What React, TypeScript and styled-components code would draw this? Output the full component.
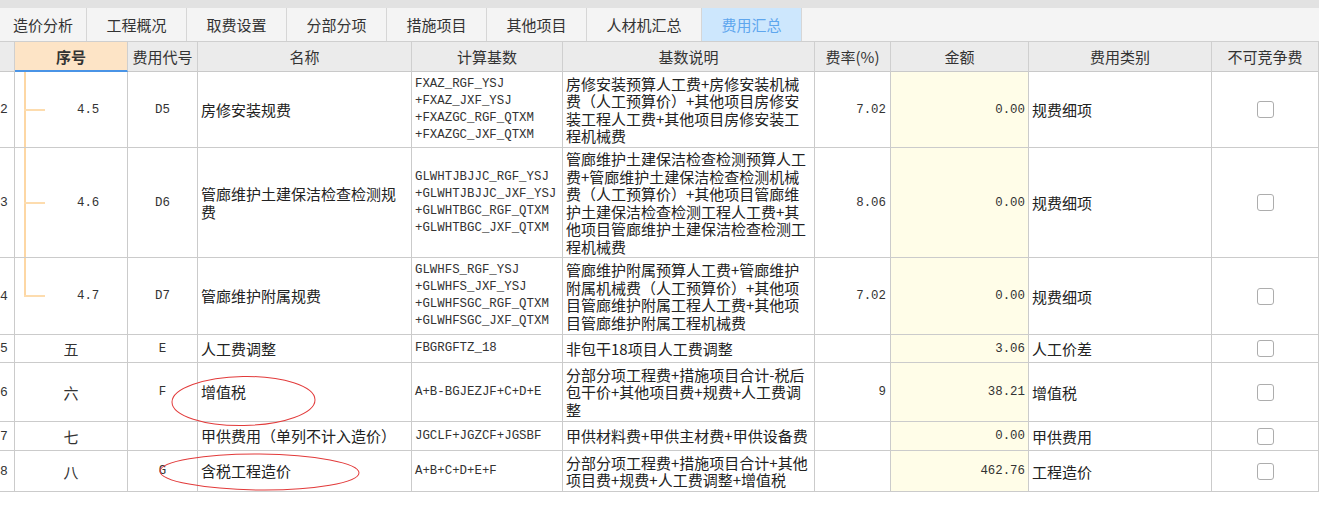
import React from 'react';
import styled, { createGlobalStyle } from 'styled-components';

const GlobalStyle = createGlobalStyle`
  html, body { margin: 0; padding: 0; background: #ffffff; }
  body {
    font-family: "Noto Sans CJK SC", "Noto Sans", sans-serif;
    color: #222;
  }
  * { box-sizing: border-box; }
`;

const COLS = '15px 113px 70px 214px 151px 252px 76px 138px 183px 107px';
const CJK = '"Noto Sans CJK SC", "Noto Sans", sans-serif';
const MONO = '"Liberation Mono", "Noto Sans CJK SC", monospace';

const Page = styled.div`
  position: relative;
  width: 1319px;
  height: 520px;
  overflow: hidden;
  background: #fff;
`;

const TopStrip = styled.div`
  height: 8px;
  background: #e2e2e2;
`;

const TabBar = styled.div`
  display: flex;
  height: 34px;
  background: #f4f4f4;
  border-bottom: 1px solid #cfcfcf;
`;

const Tab = styled.div<{ $w: number; $active?: boolean }>`
  width: ${(p) => p.$w}px;
  display: flex;
  align-items: center;
  justify-content: center;
  border-right: 1px solid #d6d6d6;
  font-family: ${CJK};
  font-size: 15px;
  color: ${(p) => (p.$active ? '#5ea6ee' : '#333')};
  background: ${(p) => (p.$active ? '#cde7fd' : 'transparent')};
`;

const HeaderRow = styled.div`
  display: grid;
  grid-template-columns: ${COLS};
  height: 30px;
  background: #ebebeb;
`;

const HeadCell = styled.div<{ $hot?: boolean }>`
  display: flex;
  align-items: center;
  justify-content: center;
  border-right: 1px solid #cfcfcf;
  border-bottom: ${(p) => (p.$hot ? '2px solid #4a94e6' : '1px solid #c9c9c9')};
  background: ${(p) => (p.$hot ? '#fde4c6' : 'transparent')};
  font-family: ${CJK};
  font-size: 15px;
  font-weight: ${(p) => (p.$hot ? 700 : 400)};
  color: #333;
  white-space: nowrap;
  overflow: hidden;
`;

const Row = styled.div<{ $h: number }>`
  display: grid;
  grid-template-columns: ${COLS};
  height: ${(p) => p.$h}px;
`;

const Cell = styled.div`
  display: flex;
  align-items: center;
  border-right: 1px solid #cbcbcb;
  border-bottom: 1px solid #cbcbcb;
  overflow: hidden;
  min-width: 0;
`;

const NumCell = styled(Cell)`
  font-family: ${MONO};
  font-size: 13px;
  color: #333;
  padding-left: 0;
`;

const SeqCell = styled(Cell)<{ $tree?: 'mid' | 'last' }>`
  position: relative;
  justify-content: ${(p) => (p.$tree ? 'flex-start' : 'center')};
  padding-left: ${(p) => (p.$tree ? '62px' : '0')};
  font-family: ${(p) => (p.$tree ? MONO : CJK)};
  font-size: ${(p) => (p.$tree ? '12.4px' : '15px')};
  color: #333;

  &::before {
    content: '';
    display: ${(p) => (p.$tree ? 'block' : 'none')};
    position: absolute;
    left: 9px;
    top: 0;
    width: 2px;
    height: ${(p) => (p.$tree === 'last' ? '50%' : '100%')};
    background: #fdd7a4;
  }
  &::after {
    content: '';
    display: ${(p) => (p.$tree ? 'block' : 'none')};
    position: absolute;
    left: 9px;
    top: calc(50% - 1px);
    width: 21px;
    height: 2px;
    background: #fddcae;
  }
`;

const CodeCell = styled(Cell)`
  justify-content: center;
  font-family: ${MONO};
  font-size: 12.4px;
  color: #333;
`;

const NameCell = styled(Cell)`
  padding: 0 6px 0 3px;
  font-family: ${CJK};
  font-size: 15px;
  line-height: 18px;
  color: #222;
`;

const FormulaCell = styled(Cell)`
  flex-direction: column;
  align-items: flex-start;
  justify-content: center;
  padding-left: 3px;
  font-family: ${MONO};
  font-size: 12.4px;
  line-height: 17px;
  color: #333;
  white-space: pre;
`;

const DescCell = styled(Cell)`
  flex-direction: column;
  align-items: flex-start;
  justify-content: center;
  padding-left: 3px;
  font-family: ${CJK};
  font-size: 15px;
  line-height: 17.5px;
  color: #222;
  white-space: nowrap;
`;

const RateCell = styled(Cell)`
  justify-content: flex-end;
  padding-right: 4px;
  font-family: ${MONO};
  font-size: 12.4px;
  color: #333;
`;

const AmountCell = styled(Cell)`
  justify-content: flex-end;
  padding-right: 3px;
  background: #fffde8;
  font-family: ${MONO};
  font-size: 12.4px;
  color: #333;
`;

const TypeCell = styled(Cell)`
  padding-left: 3px;
  font-family: ${CJK};
  font-size: 15px;
  color: #222;
`;

const CheckCell = styled(Cell)`
  justify-content: center;
`;

const CheckBox = styled.span`
  display: block;
  width: 17px;
  height: 17px;
  border: 1px solid #adadad;
  border-radius: 3px;
  background: #fff;
`;

const Line = styled.div``;

const Annotations = styled.svg`
  position: absolute;
  left: 0;
  top: 0;
  pointer-events: none;
`;

const tabs = [
  { label: '造价分析', w: 87 },
  { label: '工程概况', w: 100 },
  { label: '取费设置', w: 100 },
  { label: '分部分项', w: 100 },
  { label: '措施项目', w: 100 },
  { label: '其他项目', w: 100 },
  { label: '人材机汇总', w: 115 },
  { label: '费用汇总', w: 100, active: true },
];

const headers = ['', '序号', '费用代号', '名称', '计算基数', '基数说明', '费率(%)', '金额', '费用类别', '不可竞争费'];

type RowData = {
  n: string;
  h: number;
  seq: string;
  tree?: 'mid' | 'last';
  code: string;
  name: string;
  formula: string[];
  desc: string[];
  rate: string;
  amount: string;
  type: string;
};

const rows: RowData[] = [
  {
    n: '2', h: 76, seq: '4.5', tree: 'mid', code: 'D5', name: '房修安装规费',
    formula: ['FXAZ_RGF_YSJ', '+FXAZ_JXF_YSJ', '+FXAZGC_RGF_QTXM', '+FXAZGC_JXF_QTXM'],
    desc: ['房修安装预算人工费+房修安装机械', '费（人工预算价）+其他项目房修安', '装工程人工费+其他项目房修安装工', '程机械费'],
    rate: '7.02', amount: '0.00', type: '规费细项',
  },
  {
    n: '3', h: 110, seq: '4.6', tree: 'mid', code: 'D6', name: '管廊维护土建保洁检查检测规费',
    formula: ['GLWHTJBJJC_RGF_YSJ', '+GLWHTJBJJC_JXF_YSJ', '+GLWHTBGC_RGF_QTXM', '+GLWHTBGC_JXF_QTXM'],
    desc: ['管廊维护土建保洁检查检测预算人工', '费+管廊维护土建保洁检查检测机械', '费（人工预算价）+其他项目管廊维', '护土建保洁检查检测工程人工费+其', '他项目管廊维护土建保洁检查检测工', '程机械费'],
    rate: '8.06', amount: '0.00', type: '规费细项',
  },
  {
    n: '4', h: 77, seq: '4.7', tree: 'last', code: 'D7', name: '管廊维护附属规费',
    formula: ['GLWHFS_RGF_YSJ', '+GLWHFS_JXF_YSJ', '+GLWHFSGC_RGF_QTXM', '+GLWHFSGC_JXF_QTXM'],
    desc: ['管廊维护附属预算人工费+管廊维护', '附属机械费（人工预算价）+其他项', '目管廊维护附属工程人工费+其他项', '目管廊维护附属工程机械费'],
    rate: '7.02', amount: '0.00', type: '规费细项',
  },
  {
    n: '5', h: 28, seq: '五', code: 'E', name: '人工费调整',
    formula: ['FBGRGFTZ_18'], desc: ['非包干18项目人工费调整'],
    rate: '', amount: '3.06', type: '人工价差',
  },
  {
    n: '6', h: 59, seq: '六', code: 'F', name: '增值税',
    formula: ['A+B-BGJEZJF+C+D+E'],
    desc: ['分部分项工程费+措施项目合计-税后', '包干价+其他项目费+规费+人工费调', '整'],
    rate: '9', amount: '38.21', type: '增值税',
  },
  {
    n: '7', h: 29, seq: '七', code: '', name: '甲供费用（单列不计入造价）',
    formula: ['JGCLF+JGZCF+JGSBF'], desc: ['甲供材料费+甲供主材费+甲供设备费'],
    rate: '', amount: '0.00', type: '甲供费用',
  },
  {
    n: '8', h: 41, seq: '八', code: 'G', name: '含税工程造价',
    formula: ['A+B+C+D+E+F'],
    desc: ['分部分项工程费+措施项目合计+其他', '项目费+规费+人工费调整+增值税'],
    rate: '', amount: '462.76', type: '工程造价',
  },
];

export default function App() {
  return (
    <Page>
      <GlobalStyle />
      <TopStrip />
      <TabBar>
        {tabs.map((t) => (
          <Tab key={t.label} $w={t.w} $active={t.active}>
            {t.label}
          </Tab>
        ))}
      </TabBar>
      <HeaderRow>
        {headers.map((h, i) => (
          <HeadCell key={i} $hot={i === 1}>
            {h}
          </HeadCell>
        ))}
      </HeaderRow>
      {rows.map((r) => (
        <Row key={r.n} $h={r.h}>
          <NumCell>{r.n}</NumCell>
          <SeqCell $tree={r.tree}>{r.seq}</SeqCell>
          <CodeCell>{r.code}</CodeCell>
          <NameCell>{r.name}</NameCell>
          <FormulaCell>
            {r.formula.map((f, i) => (
              <Line key={i}>{f}</Line>
            ))}
          </FormulaCell>
          <DescCell>
            {r.desc.map((d, i) => (
              <Line key={i}>{d}</Line>
            ))}
          </DescCell>
          <RateCell>{r.rate}</RateCell>
          <AmountCell>{r.amount}</AmountCell>
          <TypeCell>{r.type}</TypeCell>
          <CheckCell>
            <CheckBox />
          </CheckCell>
        </Row>
      ))}
      <Annotations width="1319" height="520" viewBox="0 0 1319 520">
        <ellipse cx="243.5" cy="401" rx="71.5" ry="24.5" fill="none" stroke="#e23a3a" strokeWidth="1" transform="rotate(-1 243.5 401)" />
        <ellipse cx="259.5" cy="472" rx="99.5" ry="18" fill="none" stroke="#e23a3a" strokeWidth="1" transform="rotate(0.5 259.5 472)" />
      </Annotations>
    </Page>
  );
}
